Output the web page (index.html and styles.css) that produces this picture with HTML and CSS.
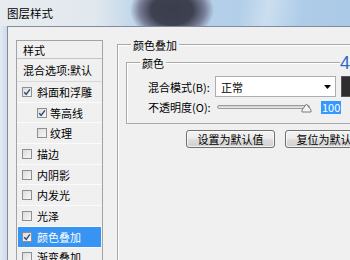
FILE: index.html
```html
<!DOCTYPE html>
<html lang="zh-CN">
<head>
  <meta charset="UTF-8" />
  <meta name="viewport" content="width=device-width, initial-scale=1" />
  <title>图层样式</title>
  <link rel="stylesheet" href="styles.css">
</head>
<body>
  <div class="window">
    <div class="titlebar">图层样式</div>
    <div class="frame">
      <div class="frame-edge"></div>
      <div class="dialog">
        <ul class="styles-list">
          <li class="head">样式</li>
          <li class="blend">混合选项:默认</li>
          <li class="item"><span class="check"><svg viewBox="0 0 8 8"><path d="M1.2 4.2 L3.2 6.3 L6.9 1.4" /></svg></span>斜面和浮雕</li>
          <li class="item sub"><span class="check"><svg viewBox="0 0 8 8"><path d="M1.2 4.2 L3.2 6.3 L6.9 1.4" /></svg></span>等高线</li>
          <li class="item sub"><span class="check"></span>纹理</li>
          <li class="item"><span class="check"></span>描边</li>
          <li class="item"><span class="check"></span>内阴影</li>
          <li class="item"><span class="check"></span>内发光</li>
          <li class="item"><span class="check"></span>光泽</li>
          <li class="item active"><span class="check"><svg viewBox="0 0 8 8"><path d="M1.2 4.2 L3.2 6.3 L6.9 1.4" /></svg></span>颜色叠加</li>
          <li class="item"><span class="check"></span>渐变叠加</li>
        </ul>

        <div class="panel">
          <div class="group outer">
            <div class="legend">颜色叠加</div>
            <div class="group inner">
              <div class="legend">颜色</div>
              <div class="row mode">
                <span class="label">混合模式(B):</span>
                <div class="select">
                  <span>正常</span>
                  <svg class="arrow" viewBox="0 0 7 4"><path d="M0 0 H7 L3.5 4 Z" /></svg>
                </div>
                <div class="swatch"></div>
              </div>
              <div class="row opacity">
                <span class="label">不透明度(O):</span>
                <div class="slider">
                  <div class="track"></div>
                  <svg class="thumb" viewBox="0 0 11 10"><path d="M1 9 L1 7 L5.5 1 L10 7 L10 9 Z" /></svg>
                </div>
                <span class="value">100</span>
              </div>
            </div>
            <div class="buttons">
              <button>设置为默认值</button>
              <button>复位为默认值</button>
            </div>
          </div>
        </div>
      </div>
    </div>
    <div class="marker">4</div>
  </div>
</body>
</html>
```

FILE: styles.css
```css
/* Base */
* {
  box-sizing: border-box;
}
body {
  margin: 0;
  font-family: "Noto Sans CJK SC", "Liberation Sans", sans-serif;
  font-size: 11px;
  color: #000;
  background: #f0f0f0;
}
.window {
  position: relative;
  width: 350px;
  height: 260px;
  overflow: hidden;
  background: #f0f0f0;
}

/* Title bar (aero glass) */
.titlebar {
  height: 26px;
  line-height: 26px;
  padding-left: 7px;
  font-size: 11.5px;
  background:
    radial-gradient(ellipse 42px 30px at 172px 10px, #3a3d4a 0%, #3e4150 50%, rgba(95, 90, 115, 0.7) 78%, rgba(170, 190, 215, 0) 100%),
    linear-gradient(100deg, rgba(255, 255, 255, 0) 68%, rgba(255, 255, 255, 0.35) 76%, rgba(255, 255, 255, 0) 86%),
    linear-gradient(90deg, #e8ecf0 0, #e1e8ee 95px, #b8d2ea 145px, #abcae7 100%);
}

.frame {
  display: flex;
  height: 234px;
}
.frame-edge {
  width: 8px;
  background: linear-gradient(90deg, #e4ebf2, #cfdbe8);
  border-right: 1px solid #7f8d9b;
}
.dialog {
  flex: 1;
  display: flex;
  align-items: flex-start;
  padding: 13px 0 0 8px;
  border-top: 1px solid #7f8d9b;
  background: #f0f0f0;
  min-width: 0;
}

/* Style list */
.styles-list {
  list-style: none;
  margin: 0;
  padding: 0;
  width: 87px;
  flex: none;
  border: 1px solid #a3a3a3;
  border-bottom: none;
}
.styles-list li {
  display: flex;
  align-items: center;
  white-space: nowrap;
  border-bottom: 1px solid #fbfbfb;
}
.styles-list .head {
  height: 18px;
  padding-left: 6px;
  border-bottom-color: #c4c4c4;
}
.styles-list .blend {
  height: 23px;
  padding-left: 6px;
  border-bottom-color: #d8d8d8;
}
.styles-list .item {
  height: 20.7px;
  padding-left: 5px;
  gap: 5px;
}
.styles-list .sub {
  padding-left: 20px;
  gap: 3px;
}
.styles-list .active {
  background: #3794f2;
  color: #fff;
  margin: 0 1px;
  padding-left: 4px;
}
.check {
  width: 10px;
  height: 10px;
  flex: none;
  border: 1px solid #8e8f91;
  background: linear-gradient(135deg, #dcdcdc, #f7f7f7);
  display: flex;
  align-items: center;
  justify-content: center;
}
.check svg {
  width: 8px;
  height: 8px;
}
.check path {
  fill: none;
  stroke: #2c4a7a;
  stroke-width: 1.4;
}

/* Settings panel */
.panel {
  flex: 1;
  min-width: 0;
  margin-left: 14px;
}
.group {
  border-top: 1px solid #a9a9a9;
  border-left: 1px solid #a9a9a9;
  box-shadow: inset 1px 1px 0 #fff;
}
.outer {
  margin-top: 4px;
  width: 260px;
  height: 230px;
}
.inner {
  margin: 10px 0 0 8px;
  width: 240px;
  padding-bottom: 9px;
  border-bottom: 1px solid #a9a9a9;
}
.legend {
  width: fit-content;
  height: 14px;
  line-height: 14px;
  margin: -7px 0 0 13px;
  padding: 0 2px;
  background: #f0f0f0;
}

.row {
  display: flex;
  align-items: center;
  padding-left: 21px;
}
.label {
  width: 67px;
  flex: none;
  white-space: nowrap;
}
.mode {
  margin-top: 6px;
  height: 21px;
}
.select {
  width: 121px;
  height: 21px;
  flex: none;
  display: flex;
  align-items: center;
  justify-content: space-between;
  padding: 0 4px 0 5px;
  background: #fff;
  border: 1px solid #abadb3;
}
.arrow {
  width: 7px;
  height: 4px;
}
.swatch {
  width: 22px;
  height: 21px;
  flex: none;
  margin-left: 5px;
  background: #2e2e2e;
  border: 1px solid #555;
}
.opacity {
  margin-top: 3px;
  height: 14px;
}
.slider {
  position: relative;
  width: 93px;
  height: 14px;
  flex: none;
  margin-left: 2px;
  display: flex;
  align-items: center;
}
.track {
  width: 100%;
  height: 4px;
  border: 1px solid #9c9c9c;
  border-radius: 2px;
  background: linear-gradient(#c9c9c9, #efefef);
}
.thumb {
  position: absolute;
  right: -2px;
  top: 3px;
  width: 11px;
  height: 10px;
}
.thumb path {
  fill: #f4f4f4;
  stroke: #7a7a7a;
  stroke-width: 1;
}
.value {
  margin-left: 11px;
  padding: 0 1px;
  line-height: 13px;
  background: #3399ff;
  color: #fff;
}

/* Buttons */
.buttons {
  display: flex;
  gap: 10px;
  margin-top: 6px;
  padding-left: 68px;
}
.buttons button {
  width: 89px;
  height: 18px;
  flex: none;
  padding: 0;
  font-family: inherit;
  font-size: 11px;
  color: #000;
  border: 1px solid #707070;
  border-radius: 3px;
  background: linear-gradient(#f3f3f3 0, #ebebeb 48%, #dedede 52%, #cfcfcf 100%);
  box-shadow: inset 0 0 0 1px rgba(255, 255, 255, 0.7);
}

/* Tutorial marker */
.marker {
  position: absolute;
  left: 340px;
  top: 53px;
  font-family: "Liberation Sans", sans-serif;
  font-size: 18px;
  line-height: 20px;
  color: #2f67c4;
  background: #f0f0f0;
}
```
